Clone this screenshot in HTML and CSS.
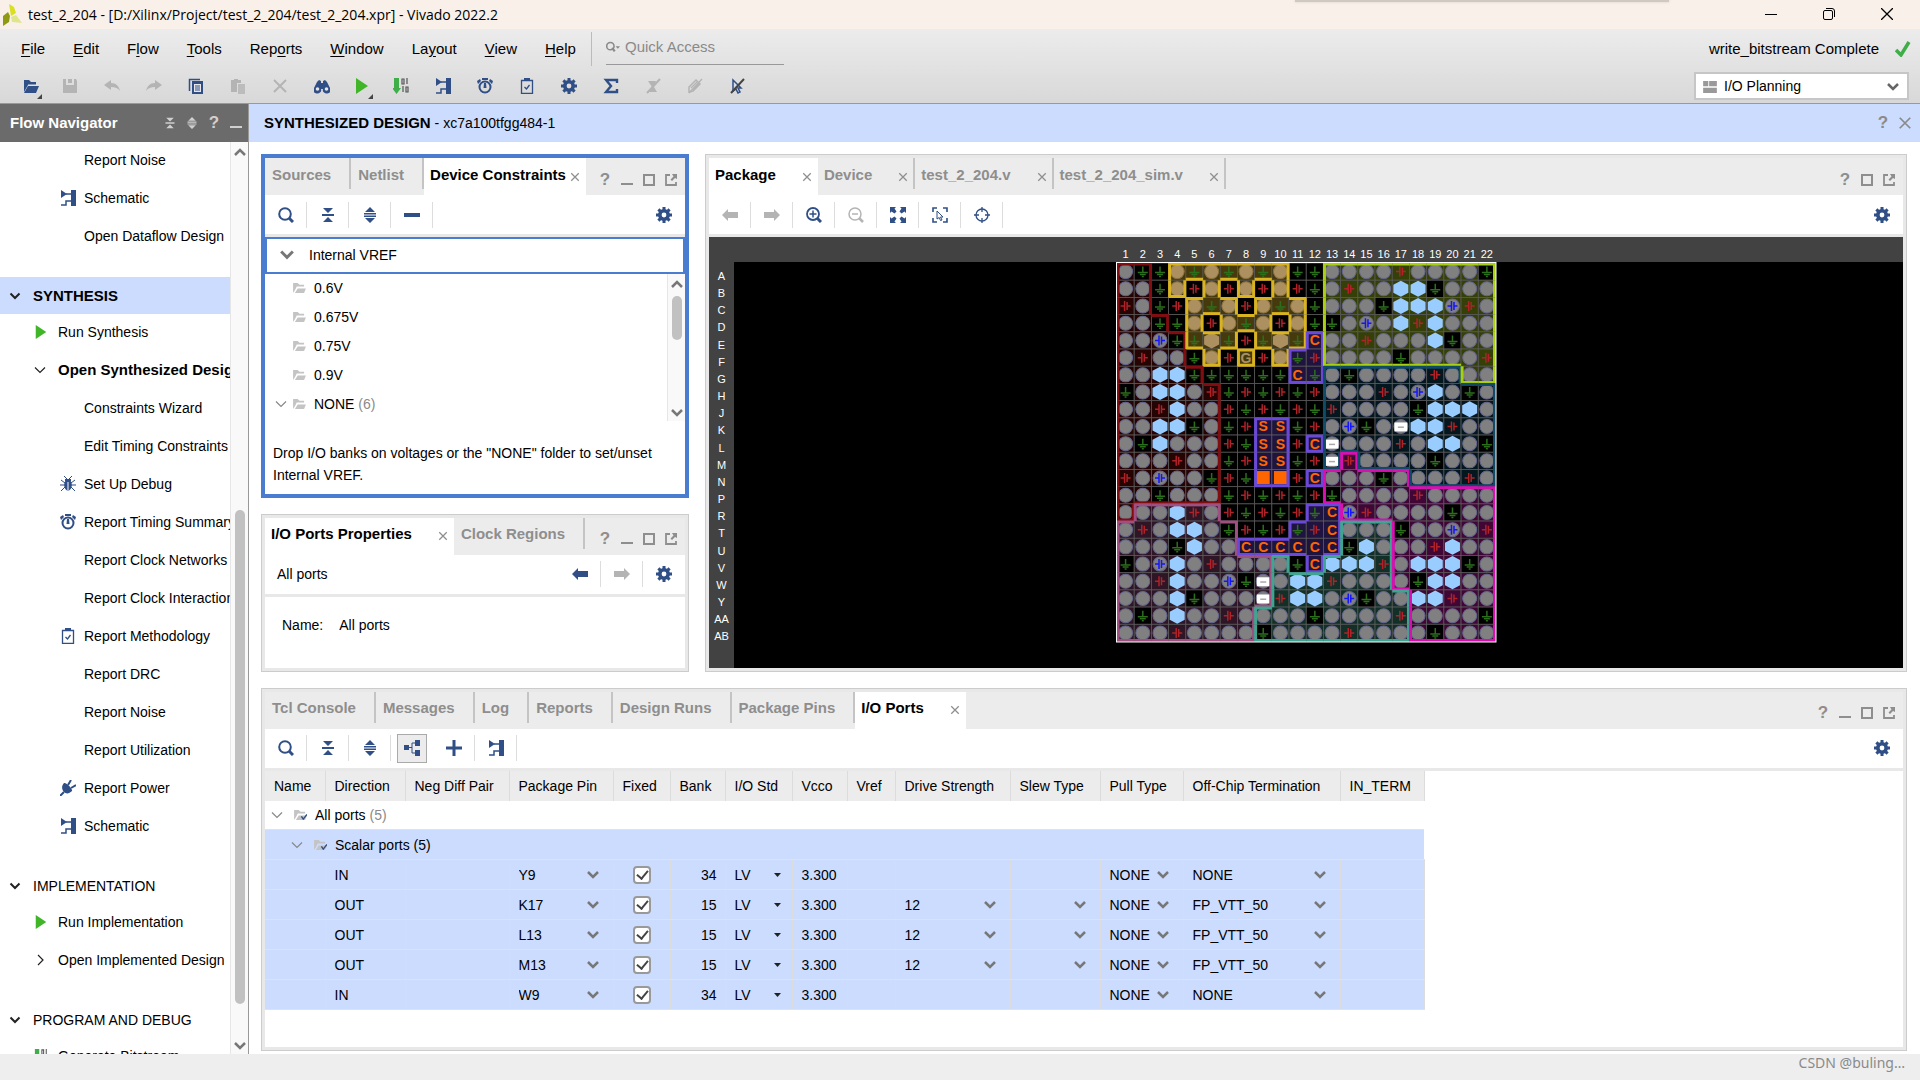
FILE: index.html
```html
<!DOCTYPE html>
<html lang="en">
<head>
  <meta charset="utf-8">
  <title>test_2_204 - Vivado 2022.2</title>
  <link rel="stylesheet" href="styles.css">
</head>
<body>

  <!-- icon set -->
  <svg class="sprite" aria-hidden="true">
    <symbol id="i-logo" viewBox="0 0 20 24"><path d="M7 1 L12 4 L14 10 L9 13 Z" fill="#d9e021"/><path d="M6 9 L8 13 L7 19 L1 23 L1 13 Z" fill="#8f9a10"/><path d="M9 14 L14 12 L20 20 L10 19 Z" fill="#dfe58a"/></symbol>
    <symbol id="i-open" viewBox="0 0 16 16"><path d="M1 14V2h5l2 2h5v3H5z M1 15l4-7h11l-3 7z"/><path d="M5 7h9" stroke="#e4e4e4"/></symbol>
    <symbol id="i-save" viewBox="0 0 16 16"><path d="M1 1h3v6h8V1h2l1 2v12H1z M6 1h4v4H6z"/></symbol>
    <symbol id="i-undo" viewBox="0 0 16 16"><path d="M0 7l7-5v3c5 0 8 3 9 8-2-3-5-4-9-4v3z"/></symbol>
    <symbol id="i-redo" viewBox="0 0 16 16"><path d="M16 7L9 2v3C4 5 1 8 0 13c2-3 5-4 9-4v3z"/></symbol>
    <symbol id="i-copy" viewBox="0 0 16 16"><path d="M1.500 13V1.500H12" fill="none" stroke="currentColor" stroke-width="1.500"/><path d="M4 3h11v13H4z"/><path d="M6 6h7v8H6z" fill="#e8e8e8"/><path d="M7 8h5M7 10h5M7 12h5" stroke="currentColor"/></symbol>
    <symbol id="i-paste" viewBox="0 0 16 16"><path d="M1 2h3V1h4v1h3v3H7v9H1z"/><path d="M8 6h7v10H8z" opacity=".8"/></symbol>
    <symbol id="i-x" viewBox="0 0 16 16"><path d="M2 2l12 12M14 2L2 14" fill="none" stroke="currentColor" stroke-width="2"/></symbol>
    <symbol id="i-find" viewBox="0 0 16 16"><path d="M3 4l2-2 2 1v2h2V3l2-1 2 2 3 6a4 3.500 0 1 1-7 1H7a4 3.500 0 1 1-7-1z"/><circle cx="3.500" cy="11" r="1.800" fill="#e4e4e4"/><circle cx="12.500" cy="11" r="1.800" fill="#e4e4e4"/></symbol>
    <symbol id="i-play" viewBox="0 0 16 16"><path d="M2 0l12 8-12 8z" fill="#3fb527"/></symbol>
    <symbol id="i-bits" viewBox="0 0 16 16"><path d="M1 0h5v10h2l-4.500 6L-1 10h2z" fill="#3fae49"/><path d="M9 1h2v5H9zM14 0v6M10 8v6M13 9h2v5h-2z" fill="none" stroke="#555" stroke-width="1.200"/></symbol>
    <symbol id="i-schem" viewBox="0 0 16 16"><path d="M1 0l6 4-6 4z M11 0h5v16h-5z"/><path d="M6 4h6M1 15h5v-4h6" fill="none" stroke="currentColor" stroke-width="1.500"/></symbol>
    <symbol id="i-clock" viewBox="0 0 16 16"><circle cx="8" cy="9" r="5.500" fill="none" stroke="currentColor" stroke-width="2"/><path d="M5 0h6v2H5z M7 5h2l.5 5h-3z M0 3l3-2 1 2-3 3z M16 3l-3-2-1 2 3 3z"/></symbol>
    <symbol id="i-clip" viewBox="0 0 16 16"><path d="M2.500 2.500h11v13h-11z" fill="none" stroke="currentColor" stroke-width="1.300"/><path d="M5 0h6v3H5z"/><path d="M5.500 9l2 2 3-4" fill="none" stroke="currentColor" stroke-width="1.300"/></symbol>
    <symbol id="i-gear" viewBox="0 0 16 16"><circle cx="8" cy="8" r="4.200" fill="none" stroke="currentColor" stroke-width="3.600"/><path d="M8 0v4M8 12v4M0 8h4M12 8h4M2.400 2.400l2.500 2.500M11.100 11.100l2.500 2.500M13.600 2.400l-2.500 2.500M4.900 11.100l-2.500 2.500" stroke="currentColor" stroke-width="3"/></symbol>
    <symbol id="i-sigma" viewBox="0 0 16 16"><path d="M14 5V2H3l5 6-5 6h11v-3" fill="none" stroke="currentColor" stroke-width="2.400"/></symbol>
    <symbol id="i-noclean" viewBox="0 0 16 16"><path d="M3 3h8l-2 6 3 5H3l4-5z"/><path d="M15 1L2 15" stroke="currentColor" stroke-width="2"/></symbol>
    <symbol id="i-noedit" viewBox="0 0 16 16"><path d="M2 9l7-7 4 4-7 7-4 1z" fill="none" stroke="currentColor" stroke-width="1.500"/><path d="M4 10l6-6M6 12l7-7M15 1L2 15" stroke="currentColor" stroke-width="1.300"/></symbol>
    <symbol id="i-nosel" viewBox="0 0 16 16"><path d="M4 2l8 8H9l2 4-2 1-2-4-3 2z" fill="none" stroke="#2f4f86" stroke-width="1.500"/><path d="M15 1L2 15" stroke="#444" stroke-width="2"/></symbol>
    <symbol id="i-bug" viewBox="0 0 16 16"><ellipse cx="8" cy="9" rx="3.800" ry="5.500"/><path d="M5 3h6v2H5z"/><path d="M4 0l3 3M12 0L9 3M0 9h16M1 4l4 3M15 4l-4 3M1 15l4-4M15 15l-4-4" stroke="currentColor"/><path d="M8 6v8" stroke="#fff"/></symbol>
    <symbol id="i-plug" viewBox="0 0 16 16"><path d="M4 3c2-1 9 6 8 8-3 3-6 3-8 1S1 6 4 3z"/><path d="M0 16l4-4M8 5l3-5M11 8l5-3" stroke="currentColor" stroke-width="2"/></symbol>
    <symbol id="i-down" viewBox="0 0 12 12"><path d="M1.500 3.500L6 8l4.500-4.500" fill="none" stroke="currentColor" stroke-width="2"/></symbol>
    <symbol id="i-thin" viewBox="0 0 12 12"><path d="M1 3.500L6 8.500l5-5" fill="none" stroke="currentColor" stroke-width="1.200"/></symbol>
    <symbol id="i-right" viewBox="0 0 12 12"><path d="M4 1l5 5-5 5" fill="none" stroke="currentColor" stroke-width="1.200"/></symbol>
    <symbol id="i-up" viewBox="0 0 12 12"><path d="M1 9l5-5 5 5" fill="none" stroke="currentColor" stroke-width="2.500"/></symbol>
    <symbol id="i-fat" viewBox="0 0 12 12"><path d="M1 3l5 5 5-5" fill="none" stroke="currentColor" stroke-width="2.500"/></symbol>
    <symbol id="i-collapse" viewBox="0 0 16 16"><path d="M3 1h10L8 6z M3 15h10l-5-5z M2 7h12v2H2z"/></symbol>
    <symbol id="i-expand" viewBox="0 0 16 16"><path d="M8 0l5 5H3z M8 16l5-5H3z M2 6h12v1.500H2z M2 8.500h12V10H2z"/></symbol>
    <symbol id="i-search" viewBox="0 0 16 16"><circle cx="7" cy="7" r="5.800" fill="none" stroke="currentColor" stroke-width="2"/><path d="M11 11l4 4" stroke="currentColor" stroke-width="3"/></symbol>
    <symbol id="i-quick" viewBox="0 0 16 16"><circle cx="5" cy="7" r="4.200" fill="none" stroke="currentColor" stroke-width="1.800"/><path d="M7 9l3 4" stroke="currentColor" stroke-width="2.500"/><path d="M11 7h5l-2.500 3z"/></symbol>
    <symbol id="i-zin" viewBox="0 0 16 16"><circle cx="7" cy="7" r="6" fill="none" stroke="currentColor" stroke-width="1.800"/><path d="M11 11l4 4" stroke="currentColor" stroke-width="3"/><path d="M3.500 7h7M7 3.500v7" stroke="currentColor" stroke-width="1.500"/></symbol>
    <symbol id="i-zout" viewBox="0 0 16 16"><circle cx="7" cy="7" r="6" fill="none" stroke="currentColor" stroke-width="1.500"/><path d="M11 11l4 4" stroke="currentColor" stroke-width="2.500"/><path d="M4 7h6" stroke="currentColor" stroke-width="1.500"/></symbol>
    <symbol id="i-fit" viewBox="0 0 16 16"><path d="M0 0h6L4.500 1.500l2 3-2 2-3-2L0 6zM16 0v6l-1.500-1.500-3 2-2-2 2-3L10 0zM0 16v-6l1.500 1.500 3-2 2 2-2 3L6 16zM16 16h-6l1.500-1.500-2-3 2-2 3 2L16 10z"/></symbol>
    <symbol id="i-fitsel" viewBox="0 0 16 16"><path d="M1 5V1h4M11 1h4v4M15 11v4h-4M5 15H1v-4" fill="none" stroke="currentColor" stroke-width="1.600"/><path d="M5 4l6 6H8.500l1.500 3-1.500.5-1.300-3L5 12z" fill="none" stroke="currentColor"/></symbol>
    <symbol id="i-target" viewBox="0 0 16 16"><circle cx="8" cy="8" r="6" fill="none" stroke="currentColor" stroke-width="1.300"/><path d="M8 0v5M8 11v5M0 8h5M11 8h5" stroke="currentColor" stroke-width="1.300"/></symbol>
    <symbol id="i-back" viewBox="0 0 16 16"><path d="M0 8l6-6v3h10v6H6v3z"/></symbol>
    <symbol id="i-fwd" viewBox="0 0 16 16"><path d="M16 8l-6-6v3H0v6h10v3z"/></symbol>
    <symbol id="i-minus" viewBox="0 0 16 16"><path d="M0 6h16v4H0z"/></symbol>
    <symbol id="i-plus" viewBox="0 0 16 16"><path d="M0 6.500h6.500V0h3v6.500H16v3H9.500V16h-3V9.500H0z"/></symbol>
    <symbol id="i-tree" viewBox="0 0 16 16"><path d="M0 5h5v5H0z M11 0h5v6h-5z M11 10h5v6h-5z"/><path d="M5 7.500h3M11 3H8v10h3" fill="none" stroke="currentColor"/></symbol>
    <symbol id="i-min" viewBox="0 0 12 12"><path d="M0 9h12v2H0z"/></symbol>
    <symbol id="i-max" viewBox="0 0 12 12"><path d="M1 1h10v10H1z" fill="none" stroke="currentColor" stroke-width="2"/></symbol>
    <symbol id="i-pop" viewBox="0 0 12 12"><path d="M5 1H1v10h10V8" fill="none" stroke="currentColor" stroke-width="1.800"/><path d="M7 0h5v5l-2-1-3 3-1.500-1.500 3-3z"/></symbol>
    <symbol id="i-folder" viewBox="0 0 14 12"><path d="M0 12V1h5l2 2h5v2H4L2 9z" /><path d="M2 12l3-5h9l-2 5z"/></symbol>
    <symbol id="i-folderck" viewBox="0 0 14 12"><path d="M0 12V1h5l2 2h5v2H4L2 9z" /><path d="M2 12l3-5h9l-2 5z"/><path d="M8 8l2 3 4-5" fill="none" stroke="#2f4f86" stroke-width="1.500"/></symbol>
    <symbol id="i-layout" viewBox="0 0 16 14"><path d="M0 0h6v6H0zM7 0h9v6H7zM0 8h16v6H0z"/></symbol>
    <symbol id="i-check" viewBox="0 0 16 16"><path d="M1 9l5 5L14 1" fill="none" stroke="#3fae49" stroke-width="3.500"/></symbol>
    <symbol id="i-wmin" viewBox="0 0 12 12"><path d="M0 6.500h12" stroke="currentColor"/></symbol>
    <symbol id="i-wmax" viewBox="0 0 12 12"><rect x=".5" y="2.500" width="9" height="9" rx="1.500" fill="none" stroke="currentColor"/><path d="M3 .5h6a2.500 2.500 0 0 1 2.500 2.500v6" fill="none" stroke="currentColor"/></symbol>
    <symbol id="i-wclose" viewBox="0 0 12 12"><path d="M0 0l12 12M12 0L0 12" stroke="currentColor" stroke-width="1.300"/></symbol>
    <symbol id="i-tri" viewBox="0 0 8 8"><path d="M1 2h7L4.500 6z"/></symbol>
  </svg>

  <header class="titlebar">
    <svg class="logo"><use href="#i-logo"/></svg>
    <span class="title">test_2_204 - [D:/Xilinx/Project/test_2_204/test_2_204.xpr] - Vivado 2022.2</span>
    <div class="drag-tab"></div>
    <div class="win-buttons">
      <button aria-label="Minimize"><svg class="i12"><use href="#i-wmin"/></svg></button>
      <button aria-label="Restore"><svg class="i12"><use href="#i-wmax"/></svg></button>
      <button aria-label="Close"><svg class="i12"><use href="#i-wclose"/></svg></button>
    </div>
  </header>

  <div class="topbar">
    <div class="menu-row">
      <nav class="menu">
        <button><u>F</u>ile</button>
        <button><u>E</u>dit</button>
        <button>F<u>l</u>ow</button>
        <button><u>T</u>ools</button>
        <button>Rep<u>o</u>rts</button>
        <button><u>W</u>indow</button>
        <button>La<u>y</u>out</button>
        <button><u>V</u>iew</button>
        <button><u>H</u>elp</button>
      </nav>
      <label class="quick">
        <svg class="i14"><use href="#i-quick"/></svg>
        <input type="text" placeholder="Quick Access" aria-label="Quick Access">
      </label>
      <span class="run-status">write_bitstream Complete</span>
      <svg class="i16"><use href="#i-check"/></svg>
    </div>
    <div class="tool-row">
      <button class="drop" aria-label="Open"><svg class="i16"><use href="#i-open"/></svg></button>
      <button class="off" aria-label="Save"><svg class="i16"><use href="#i-save"/></svg></button>
      <button class="off" aria-label="Undo"><svg class="i16"><use href="#i-undo"/></svg></button>
      <button class="off" aria-label="Redo"><svg class="i16"><use href="#i-redo"/></svg></button>
      <button aria-label="Copy"><svg class="i16"><use href="#i-copy"/></svg></button>
      <button class="off" aria-label="Paste"><svg class="i16"><use href="#i-paste"/></svg></button>
      <button class="off" aria-label="Delete"><svg class="i16"><use href="#i-x"/></svg></button>
      <button aria-label="Find"><svg class="i16"><use href="#i-find"/></svg></button>
      <button class="drop" aria-label="Run"><svg class="i16"><use href="#i-play"/></svg></button>
      <button aria-label="Generate Bitstream"><svg class="i16"><use href="#i-bits"/></svg></button>
      <button aria-label="Schematic"><svg class="i16"><use href="#i-schem"/></svg></button>
      <button aria-label="Timing"><svg class="i16"><use href="#i-clock"/></svg></button>
      <button aria-label="Methodology"><svg class="i16"><use href="#i-clip"/></svg></button>
      <button aria-label="Settings"><svg class="i16"><use href="#i-gear"/></svg></button>
      <button aria-label="Sum"><svg class="i16"><use href="#i-sigma"/></svg></button>
      <button class="off" aria-label="Unhighlight"><svg class="i16"><use href="#i-noclean"/></svg></button>
      <button class="off" aria-label="Unmark"><svg class="i16"><use href="#i-noedit"/></svg></button>
      <button aria-label="Unselect"><svg class="i16"><use href="#i-nosel"/></svg></button>
      <div class="layout-pick">
        <svg class="pick-icon"><use href="#i-layout"/></svg>
        <select aria-label="Layout"><option>I/O Planning</option></select>
        <svg class="pick-arrow"><use href="#i-fat"/></svg>
      </div>
    </div>
  </div>

  <div class="workspace">
    <aside class="flow">
      <div class="flow-head">
        <h2>Flow Navigator</h2>
        <svg class="i12"><use href="#i-collapse"/></svg>
        <svg class="i12"><use href="#i-expand"/></svg>
        <b>?</b>
        <svg class="i12"><use href="#i-min"/></svg>
      </div>
      <div class="flow-body">
        <ul class="flow-list">
          <li class="sub"><i></i>Report Noise</li>
          <li class="sub"><i><svg class="i16"><use href="#i-schem"/></svg></i>Schematic</li>
          <li class="sub"><i></i>Open Dataflow Design</li>
          <li class="head current"><i><svg class="i12"><use href="#i-down"/></svg></i>SYNTHESIS</li>
          <li class="run"><i><svg class="i14"><use href="#i-play"/></svg></i>Run Synthesis</li>
          <li class="run strong"><i><svg class="i12"><use href="#i-thin"/></svg></i>Open Synthesized Design</li>
          <li class="sub"><i></i>Constraints Wizard</li>
          <li class="sub"><i></i>Edit Timing Constraints</li>
          <li class="sub"><i><svg class="i16"><use href="#i-bug"/></svg></i>Set Up Debug</li>
          <li class="sub"><i><svg class="i16"><use href="#i-clock"/></svg></i>Report Timing Summary</li>
          <li class="sub"><i></i>Report Clock Networks</li>
          <li class="sub"><i></i>Report Clock Interaction</li>
          <li class="sub"><i><svg class="i16"><use href="#i-clip"/></svg></i>Report Methodology</li>
          <li class="sub"><i></i>Report DRC</li>
          <li class="sub"><i></i>Report Noise</li>
          <li class="sub"><i></i>Report Utilization</li>
          <li class="sub"><i><svg class="i16"><use href="#i-plug"/></svg></i>Report Power</li>
          <li class="sub"><i><svg class="i16"><use href="#i-schem"/></svg></i>Schematic</li>
          <li class="head"><i><svg class="i12"><use href="#i-down"/></svg></i>IMPLEMENTATION</li>
          <li class="run"><i><svg class="i14"><use href="#i-play"/></svg></i>Run Implementation</li>
          <li class="run"><i><svg class="i12"><use href="#i-right"/></svg></i>Open Implemented Design</li>
          <li class="head"><i><svg class="i12"><use href="#i-down"/></svg></i>PROGRAM AND DEBUG</li>
          <li class="run"><i><svg class="i14"><use href="#i-bits"/></svg></i>Generate Bitstream</li>
        </ul>
        <div class="scroll">
          <svg class="i12"><use href="#i-up"/></svg>
          <div class="track"><div class="thumb thumb-flow"></div></div>
          <svg class="i12"><use href="#i-fat"/></svg>
        </div>
      </div>
    </aside>

    <main class="design">
      <div class="design-head">
        <h1>SYNTHESIZED DESIGN<span> - xc7a100tfgg484-1</span></h1>
        <b>?</b>
        <svg class="i14"><use href="#i-x"/></svg>
      </div>

      <div class="panels">
        <div class="upper">
          <div class="left-col">
            <section class="panel focused constraints">
              <div class="tabs">
                <button class="tab">Sources</button>
                <button class="tab">Netlist</button>
                <button class="tab active tight">Device Constraints<svg class="close"><use href="#i-x"/></svg></button>
                <div class="tab-tools"><b>?</b><svg class="i12"><use href="#i-min"/></svg><svg class="i12"><use href="#i-max"/></svg><svg class="i12"><use href="#i-pop"/></svg></div>
              </div>
              <div class="tools">
                <button aria-label="Search"><svg class="i16"><use href="#i-search"/></svg></button>
                <button aria-label="Collapse"><svg class="i16"><use href="#i-collapse"/></svg></button>
                <button aria-label="Expand"><svg class="i16"><use href="#i-expand"/></svg></button>
                <button aria-label="Remove"><svg class="i16"><use href="#i-minus"/></svg></button>
                <button class="gear" aria-label="Settings"><svg class="i16"><use href="#i-gear"/></svg></button>
              </div>
              <div class="vref"><svg class="i14"><use href="#i-fat"/></svg>Internal VREF</div>
              <div class="volts">
                <ul>
                  <li><i></i><svg class="folder"><use href="#i-folder"/></svg>0.6V</li>
                  <li><i></i><svg class="folder"><use href="#i-folder"/></svg>0.675V</li>
                  <li><i></i><svg class="folder"><use href="#i-folder"/></svg>0.75V</li>
                  <li><i></i><svg class="folder"><use href="#i-folder"/></svg>0.9V</li>
                  <li><i><svg class="i12"><use href="#i-thin"/></svg></i><svg class="folder"><use href="#i-folder"/></svg>NONE&nbsp;<span class="dim">(6)</span></li>
                </ul>
                <div class="scroll">
                  <svg class="i12"><use href="#i-up"/></svg>
                  <div class="track"><div class="thumb thumb-volts"></div></div>
                  <svg class="i12"><use href="#i-fat"/></svg>
                </div>
              </div>
              <p class="hint">Drop I/O banks on voltages or the "NONE" folder to set/unset Internal VREF.</p>
            </section>

            <section class="panel props">
              <div class="tabs">
                <button class="tab active">I/O Ports Properties<svg class="close"><use href="#i-x"/></svg></button>
                <button class="tab">Clock Regions</button>
                <div class="tab-tools"><b>?</b><svg class="i12"><use href="#i-min"/></svg><svg class="i12"><use href="#i-max"/></svg><svg class="i12"><use href="#i-pop"/></svg></div>
              </div>
              <div class="tools">
                <span class="tools-title">All ports</span>
                <button aria-label="Previous"><svg class="i16"><use href="#i-back"/></svg></button>
                <button class="off" aria-label="Next"><svg class="i16"><use href="#i-fwd"/></svg></button>
                <button class="gear" aria-label="Settings"><svg class="i16"><use href="#i-gear"/></svg></button>
              </div>
              <dl class="prop"><dt>Name:</dt><dd>All ports</dd></dl>
            </section>
          </div>

          <section class="panel package">
            <div class="tabs">
              <button class="tab active">Package<svg class="close"><use href="#i-x"/></svg></button>
              <button class="tab closable">Device<svg class="close"><use href="#i-x"/></svg></button>
              <button class="tab closable">test_2_204.v<svg class="close"><use href="#i-x"/></svg></button>
              <button class="tab closable">test_2_204_sim.v<svg class="close"><use href="#i-x"/></svg></button>
              <div class="tab-tools"><b>?</b><svg class="i12"><use href="#i-max"/></svg><svg class="i12"><use href="#i-pop"/></svg></div>
            </div>
            <div class="tools">
              <button class="off" aria-label="Back"><svg class="i16"><use href="#i-back"/></svg></button>
              <button class="off" aria-label="Forward"><svg class="i16"><use href="#i-fwd"/></svg></button>
              <button aria-label="Zoom in"><svg class="i16"><use href="#i-zin"/></svg></button>
              <button class="off" aria-label="Zoom out"><svg class="i16"><use href="#i-zout"/></svg></button>
              <button aria-label="Zoom fit"><svg class="i16"><use href="#i-fit"/></svg></button>
              <button aria-label="Zoom to selection"><svg class="i16"><use href="#i-fitsel"/></svg></button>
              <button aria-label="Autofit"><svg class="i16"><use href="#i-target"/></svg></button>
              <button class="gear" aria-label="Settings"><svg class="i16"><use href="#i-gear"/></svg></button>
            </div>
            <div class="canvas">
              <div class="ruler" id="ruler"></div>
              <div class="stage"><svg id="chip"></svg></div>
            </div>
          </section>
        </div>

        <section class="panel ports">
          <div class="tabs">
            <button class="tab">Tcl Console</button>
            <button class="tab">Messages</button>
            <button class="tab">Log</button>
            <button class="tab">Reports</button>
            <button class="tab">Design Runs</button>
            <button class="tab">Package Pins</button>
            <button class="tab active">I/O Ports<svg class="close"><use href="#i-x"/></svg></button>
            <div class="tab-tools"><b>?</b><svg class="i12"><use href="#i-min"/></svg><svg class="i12"><use href="#i-max"/></svg><svg class="i12"><use href="#i-pop"/></svg></div>
          </div>
          <div class="tools">
            <button aria-label="Search"><svg class="i16"><use href="#i-search"/></svg></button>
            <button aria-label="Collapse"><svg class="i16"><use href="#i-collapse"/></svg></button>
            <button aria-label="Expand"><svg class="i16"><use href="#i-expand"/></svg></button>
            <button class="pressed" aria-label="Group"><svg class="i16"><use href="#i-tree"/></svg></button>
            <button aria-label="Add"><svg class="i16"><use href="#i-plus"/></svg></button>
            <button aria-label="Schematic"><svg class="i16"><use href="#i-schem"/></svg></button>
            <button class="gear" aria-label="Settings"><svg class="i16"><use href="#i-gear"/></svg></button>
          </div>
          <table class="port-table">
            <colgroup>
              <col class="w60"><col class="w80"><col class="w104"><col class="w104"><col class="w57"><col class="w55"><col class="w67">
              <col class="w55"><col class="w48"><col class="w115"><col class="w90"><col class="w83"><col class="w157"><col class="w84">
            </colgroup>
            <thead>
              <tr><th>Name</th><th>Direction</th><th>Neg Diff Pair</th><th>Package Pin</th><th>Fixed</th><th>Bank</th><th>I/O Std</th><th>Vcco</th><th>Vref</th><th>Drive Strength</th><th>Slew Type</th><th>Pull Type</th><th>Off-Chip Termination</th><th>IN_TERM</th></tr>
            </thead>
            <tbody id="ports">
              <tr class="group top"><td colspan="14"><div class="node"><svg class="i12"><use href="#i-thin"/></svg><svg class="folder"><use href="#i-folderck"/></svg>All ports&nbsp;<span class="dim">(5)</span></div></td></tr>
              <tr class="group sel"><td colspan="14"><div class="node deep"><svg class="i12"><use href="#i-thin"/></svg><svg class="folder"><use href="#i-folderck"/></svg>Scalar ports (5)</div></td></tr>
            </tbody>
          </table>
        </section>
      </div>
    </main>
  </div>

  <footer class="status">CSDN @buling…</footer>

  <script>
    // ---- port rows ----
    const ports = [
      ['IN', 'Y9', 34, '', 'NONE'],
      ['OUT', 'K17', 15, '12', 'FP_VTT_50'],
      ['OUT', 'L13', 15, '12', 'FP_VTT_50'],
      ['OUT', 'M13', 15, '12', 'FP_VTT_50'],
      ['IN', 'W9', 34, '', 'NONE']
    ];

    function pick(label, value, cls, icon) {
      return `<div class="pick ${cls || ''}"><select aria-label="${label}"><option>${value}</option></select>` +
        `<svg class="i12"><use href="#${icon || 'i-fat'}"/></svg></div>`;
    }

    document.getElementById('ports').insertAdjacentHTML('beforeend', ports.map(p => {
      const out = p[0] === 'OUT';
      return `<tr class="sel"><td></td><td>${p[0]}</td><td></td><td>${pick('Package Pin', p[1])}</td>` +
        `<td class="mid"><input type="checkbox" aria-label="Fixed" checked></td><td class="num">${p[2]}</td>` +
        `<td>${pick('I/O Std', 'LV', 'std', 'i-tri')}</td><td>3.300</td><td></td>` +
        `<td>${out ? pick('Drive Strength', p[3]) : ''}</td><td>${out ? pick('Slew Type', '') : ''}</td>` +
        `<td>${pick('Pull Type', 'NONE')}</td><td>${pick('Off-Chip Termination', p[4])}</td><td></td></tr>`;
    }).join(''));

    // ---- package view ----
    const rowNames = 'A B C D E F G H J K L M N P R T U V W Y AA AB'.split(' ');

    // o io, h hex, g gnd, r power, b clock, w assigned, C/S/G config, Q square
    const grid = [
      'oggogogogoggooooroooog',
      'oogororororgoroohhgooo',
      'rogrogorogogoooghhhbro',
      'ooggorogoroggobohrhooo',
      'oobgghgrghgCoorooohgoo',
      'oroogorGrogroooogoooor',
      'oohhggggggCgogoooorooo',
      'gohhorgrgrgrooorobhogo',
      'oorhoorgrgrgrooooghhho',
      'oohhgogrSSgrobgowhhroo',
      'oghooorgSSrCwooorohhog',
      'oooroogrSSgrwroooogooo',
      'roboogrgQQrCooogooooro',
      'oogooogrgrgrgoooorooo'+'o',
      'ooohrorgrgrgCbroooogoo',
      'orohhogrgrgrCooogoobor',
      'oooghooCCCCCCghooorhoo',
      'gobhoroooogChhhrohhhgo',
      'oorhoobgwohhrooooghhoo',
      'ooohgooowrhhobgoohhroo',
      'ogohooroooogooooroooog',
      'ooorooooogoooroooogooo'
    ];
    // AB9 carries the ground pin of the last row
    grid[21] = 'ooorooooGooo'.replace('G', 'g') + 'oroooogooo';

    // I/O bank of every pin
    const banks = [
      'RR.YYYYYYY..LLLLLLLLLL',
      'RR.Y.Y.Y.Y..LLLLLLLLLL',
      'RR..YYY.YYY.LLLLLLLLLL',
      'RRR.Y.YYY.Y.LLLLLLLLLL',
      'RRRRYYY.YYYPLLLLLLLLLL',
      'RRRR.Y.Y.YPPLLLLLLLLLL',
      'RRRRR.....PPNNNNNNNNLL',
      'RRRRRR......NNNNNNNNNN',
      'RRRRRR......NNNNNNNNNN',
      'RRRRRR..PP..NNNNNNNNNN',
      'RRRRRR..PP.PNNNNNNNNNN',
      'RRRRRR..PP..NMNNNNNNNN',
      'RRRRRR..PP.PMMMMMNNNNN',
      'RRRRRR......MMMMMMMMMM',
      'RVVVVV.....PPMMMMMMMMM',
      'VVVVVVV...PPPTTTMMMMMM',
      'VVVVVVVPPPPPPTTTMMMMMM',
      'VVVVVVVVVT.PTTTTMMMMMM',
      'VVVVVVVVVTTTTTTTMMMMMM',
      'VVVVVVVVVTTTTTTTTMMMMM',
      'VVVVVVVVTTTTTTTTTMMMMM',
      'VVVVVVVVTTTTTTTTTMMMMM'
    ];
    const line = { R: '#800d10', Y: '#d9b420', P: '#6a48d8', L: '#a8d010', N: '#0f4a66', M: '#d810b0', V: '#a05080', T: '#40a590' };
    const fill = { R: '#260404', Y: '#463a0c', P: '#1f1440', L: '#344008', N: '#04161e', M: '#400636', V: '#2e1626', T: '#123028', '.': '#000' };
    const S = 17.2; // pin pitch

    function pin(t, x, y, bank) {
      const cx = x + S / 2, cy = y + S / 2;
      const io = bank === 'Y' ? '#ac9060' : '#808080';
      const ball = `<circle cx="${cx}" cy="${cy}" r="7" fill="${io}" stroke="${bank === 'Y' ? '#8d7440' : '#66668c'}"/>`;
      const power = c => `<path d="M${cx - 5} ${cy}h4M${cx + 1} ${cy}h4M${cx - 1} ${cy - 5}v10M${cx + 1.5} ${cy - 4}v8" stroke="${c}" stroke-width="1.5" fill="none"/>`;
      switch (t) {
        case 'o': return ball;
        case 'h': return `<path d="M${cx} ${cy - 8}l7.5 4v8l-7.5 4l-7.5 -4v-8z" fill="${bank === 'Y' ? io : '#99ccff'}"/>`;
        case 'g': return `<path d="M${cx} ${cy - 5}v6M${cx - 5} ${cy + 1}h10M${cx - 3} ${cy + 3}h6M${cx - 1} ${cy + 5}h2" stroke="#2c6e1c" stroke-width="1.5" fill="none"/>`;
        case 'r': return power('#b02228');
        case 'b': return ball + power('#1414ff');
        case 'w': return ball + `<rect x="${cx - 6.5}" y="${cy - 4}" width="13" height="9" fill="#fff"/><rect x="${cx - 3}" y="${cy}" width="6" height="1.5" fill="#aaa"/>`;
        case 'Q': return `<rect x="${cx - 6.5}" y="${cy - 7}" width="13" height="13" fill="#ff6600"/>`;
        case 'G': return `<text class="pin-letter" x="${cx}" y="${cy + 5}" fill="#ac9060">G</text>`;
        default: return `<text class="pin-letter" x="${cx}" y="${cy + 5}" fill="#ff6600">${t}</text>`;
      }
    }

    function drawChip() {
      let back = '', front = '', edges = '', labels = '';
      for (let r = 0; r < 22; r++) {
        for (let c = 0; c < 22; c++) {
          const b = banks[r][c], t = grid[r][c];
          const x = c * S, y = r * S;
          const black = t === 'g' && b !== 'P' && b !== 'Y';
          back += `<rect x="${x}" y="${y}" width="${S}" height="${S}" fill="${black ? '#000' : fill[b]}" stroke="#5a5a5a" stroke-width=".8"/>`;
          front += pin(t, x, y, b);
          if (b === '.') continue;
          const at = (i, j) => (banks[i] || '')[j];
          let d = '';
          if (at(r - 1, c) !== b) d += `M${x} ${y + 1}h${S}`;
          if (at(r + 1, c) !== b) d += `M${x} ${y + S - 1}h${S}`;
          if (at(r, c - 1) !== b) d += `M${x + 1} ${y}v${S}`;
          if (at(r, c + 1) !== b) d += `M${x + S - 1} ${y}v${S}`;
          if (d) edges += `<path d="${d}" stroke="${line[b]}" stroke-width="3"/>`;
        }
      }
      const W = S * 22;
      for (let c = 0; c < 22; c++) {
        labels += `<text class="axis" x="${c * S + S / 2}" y="-5">${c + 1}</text>`;
      }
      const chip = document.getElementById('chip');
      chip.setAttribute('viewBox', `-1 -26 ${W + 2} ${W + 52}`);
      chip.innerHTML = back + front + edges +
        `<rect x="-.5" y="-.5" width="${W + 1}" height="${W + 1}" fill="none" stroke="#fff"/>` + labels;
      document.getElementById('ruler').innerHTML = rowNames.map(n => `<span>${n}</span>`).join('');
    }
    drawChip();
  </script>
</body>
</html>
```
FILE: styles.css
```css
* {
  box-sizing: border-box;
}

body {
  margin: 0;
  height: 100vh;
  display: flex;
  flex-direction: column;
  overflow: hidden;
  background: #fff;
  color: #000;
  font: 14px/20px "Liberation Sans", Arial, sans-serif;
}

button, input, select {
  font: inherit;
  color: inherit;
  border: 0;
  background: none;
  padding: 0;
  margin: 0;
}

select {
  appearance: none;
}

ul, dl, dd, h1, h2, p {
  margin: 0;
  padding: 0;
  list-style: none;
}

svg {
  fill: currentColor;
  flex: none;
}

.sprite {
  position: absolute;
  width: 0;
  height: 0;
}

.i16 { width: 16px; height: 16px; }
.i14 { width: 14px; height: 14px; }
.i12 { width: 12px; height: 12px; }

/* window title */
.titlebar {
  position: relative;
  display: flex;
  align-items: center;
  flex: none;
  height: 29px;
  padding: 0 4px 0 2px;
  background: #f9f1e9;
}

.logo {
  width: 20px;
  height: 24px;
}

.title {
  flex: 1;
  padding-left: 6px;
  font: 14px/20px "Open Sans", "Noto Sans", sans-serif;
}

.drag-tab {
  position: absolute;
  left: 1295px;
  top: 0;
  width: 374px;
  height: 2px;
  background: #cfc9c2;
  box-shadow: 0 0 3px #cfc9c2;
}

.win-buttons {
  display: flex;
}

.win-buttons button {
  width: 58px;
  height: 29px;
}

/* menu and main toolbar */
.topbar {
  flex: none;
  height: 75px;
  border-bottom: 1px solid #999;
  background: linear-gradient(#ececec, #d8d8d8);
}

.menu-row {
  display: flex;
  align-items: center;
  height: 40px;
  padding: 0 9px 0 7px;
  font-size: 15px;
}

.menu {
  display: flex;
  width: 585px;
  height: 34px;
  border-right: 1px solid #bbb;
}

.menu button {
  padding: 0 14px;
}

.menu u {
  text-underline-offset: 2px;
}

.quick {
  display: flex;
  align-items: center;
  gap: 5px;
  width: 178px;
  height: 32px;
  margin: 0 auto 0 14px;
  padding-bottom: 4px;
  border-bottom: 1px solid #999;
  color: #8a8a8a;
}

.quick input {
  width: 140px;
  outline: 0;
}

.quick input::placeholder {
  color: #8a8a8a;
}

.run-status {
  padding-right: 16px;
}

.tool-row {
  display: flex;
  align-items: center;
  height: 34px;
  padding: 0 11px 0 12px;
  color: #2f4f86;
}

.tool-row button {
  position: relative;
  display: flex;
  align-items: center;
  justify-content: center;
  width: 42px;
  height: 30px;
}

.tool-row .drop {
  width: 37px;
}

.tool-row .drop::after {
  content: "";
  position: absolute;
  right: 7px;
  bottom: 2px;
  border-left: 5px solid transparent;
  border-bottom: 5px solid #444;
}

.tool-row .off, .tools .off {
  color: #b4b4b4;
}

.layout-pick {
  position: relative;
  width: 215px;
  margin-left: auto;
  color: #000;
}

.layout-pick select {
  display: block;
  width: 100%;
  height: 28px;
  padding-left: 28px;
  border: 2px solid #c6c6c6;
  background: #fff;
}

.pick-icon {
  position: absolute;
  left: 9px;
  top: 9px;
  width: 14px;
  height: 12px;
  color: #999;
}

.pick-arrow {
  position: absolute;
  right: 10px;
  top: 9px;
  width: 12px;
  height: 12px;
  color: #666;
}

/* flow navigator */
.workspace {
  display: flex;
  flex: 1;
  min-height: 0;
}

.flow {
  display: flex;
  flex-direction: column;
  flex: none;
  width: 249px;
  border-right: 1px solid #999;
}

.flow-head {
  display: flex;
  align-items: center;
  gap: 10px;
  flex: none;
  height: 38px;
  padding: 0 6px 0 10px;
  background: #6b6b6b;
  color: #d0d0d0;
}

.flow-head h2 {
  flex: 1;
  color: #fff;
  font-size: 15px;
}

.flow-head b, .design-head b, .tab-tools b {
  width: 12px;
  font-size: 17px;
  text-align: center;
}

.flow-body {
  display: flex;
  flex: 1;
  min-height: 0;
}

.flow-list {
  flex: 1;
  overflow: hidden;
  white-space: nowrap;
}

.flow-list li {
  display: flex;
  align-items: center;
  height: 38px;
  padding-bottom: 2px;
}

.flow-list i {
  display: flex;
  flex: none;
  width: 24px;
  color: #2f4f86;
}

.flow-list .sub { padding-left: 60px; }
.flow-list .run { padding-left: 34px; }

.flow-list .run i, .flow-list .head i {
  color: #222;
}

.flow-list .head {
  height: 37px;
  margin-top: 21px;
  padding: 0 0 0 9px;
}

.flow-list .current {
  background: #cbdcff;
}

.current, .strong {
  font-size: 15px;
  font-weight: bold;
}

.scroll {
  display: flex;
  flex-direction: column;
  align-items: center;
  flex: none;
  width: 18px;
  padding: 4px 0 2px;
  border-left: 1px solid #e6e6e6;
  background: #f9f9f9;
  color: #777;
}

.track {
  flex: 1;
  width: 10px;
}

.thumb {
  border-radius: 5px;
  background: #c1c1c1;
}

.thumb-flow {
  height: 56%;
  margin-top: 352px;
}

.thumb-volts {
  height: 44px;
  margin-top: 6px;
}

/* design area */
.design {
  display: flex;
  flex-direction: column;
  flex: 1;
  min-width: 0;
}

.design-head {
  display: flex;
  align-items: center;
  gap: 9px;
  flex: none;
  height: 38px;
  padding: 0 8px 0 15px;
  background: #cbdcff;
  color: #8a8a8a;
}

.design-head h1 {
  flex: 1;
  color: #000;
  font-size: 15px;
}

.design-head span {
  font-size: 14px;
  font-weight: normal;
}

.panels {
  display: flex;
  flex-direction: column;
  flex: 1;
  gap: 16px;
  min-height: 0;
  padding: 12px 13px 3px 12px;
}

.upper {
  display: flex;
  flex: 1;
  gap: 16px;
  min-height: 0;
}

.left-col {
  display: flex;
  flex-direction: column;
  gap: 16px;
  width: 428px;
}

.panel {
  display: flex;
  flex-direction: column;
  min-width: 0;
  min-height: 0;
  padding: 3px;
  border: 1px solid #ccc;
  background: linear-gradient(#fff, #fff) content-box, #e8e8e8;
}

.focused {
  padding: 0;
  border: 4px solid #4a7dcf;
}

.constraints, .package {
  flex: 1;
}

.props, .ports {
  flex: none;
}

.tabs {
  display: flex;
  flex: none;
  height: 37px;
  background: #ececec;
}

.tab {
  display: flex;
  align-items: center;
  height: 31px;
  padding: 2px 18px 0 7px;
  border-right: 2px solid #c4c4c4;
  color: #8e8e8e;
  font-size: 15px;
  font-weight: bold;
  white-space: nowrap;
}

.tab.active {
  height: 37px;
  padding: 0 6px 4px;
  border-right: 0;
  background: #fff;
  color: #000;
}

.tab.closable {
  padding: 2px 5px 0 6px;
}

.close {
  width: 10px;
  height: 10px;
  margin: 4px 0 0 26px;
  color: #8e8e8e;
}

.tight .close {
  margin-left: 4px;
}

.tab-tools {
  display: flex;
  align-items: center;
  gap: 10px;
  margin-left: auto;
  padding: 6px 8px 0 0;
  color: #8e8e8e;
}

.tools {
  display: flex;
  align-items: center;
  flex: none;
  height: 42px;
  border-bottom: 3px solid #e8e8e8;
  color: #2f4f86;
}

.tools button {
  display: flex;
  align-items: center;
  justify-content: center;
  width: 42px;
  height: 26px;
  border-right: 1px solid #ddd;
}

.tools .gear {
  margin-left: auto;
  border-right: 0;
}

.tools .pressed {
  width: 30px;
  height: 29px;
  margin: 0 6px;
  border: 1px solid #aaa;
  background: #ececec;
}

.props .tools .gear {
  margin-left: 0;
}

.tools-title {
  flex: 1;
  padding-left: 12px;
  color: #000;
}

.vref {
  display: flex;
  align-items: center;
  gap: 15px;
  flex: none;
  height: 37px;
  padding: 0 0 2px 13px;
  border: 2px solid #4a7dcf;
}

.vref svg {
  color: #777;
}

.volts {
  display: flex;
  flex: none;
}

.volts ul {
  flex: 1;
  padding-bottom: 2px;
}

.volts li {
  display: flex;
  align-items: center;
  height: 29px;
  padding: 0 0 2px 10px;
}

.volts i {
  display: flex;
  width: 18px;
  color: #888;
}

.folder {
  width: 13px;
  height: 11px;
  margin-right: 8px;
  color: #c4c4c4;
}

.dim {
  color: #8a8a8a;
}

.hint {
  padding: 21px 8px 0;
  line-height: 22px;
}

.prop {
  display: flex;
  gap: 16px;
  padding: 18px 17px 33px;
}

/* package view */
.canvas {
  display: flex;
  flex: 1;
  min-height: 0;
  background: #000;
  color: #fff;
}

.ruler {
  display: flex;
  flex-direction: column;
  justify-content: space-between;
  flex: none;
  width: 25px;
  padding: 33px 0 25px;
  background: #424242;
  font-size: 11px;
  line-height: 12px;
  text-align: center;
}

.stage {
  display: flex;
  justify-content: center;
  flex: 1;
  min-width: 0;
  padding-right: 24px;
  background: linear-gradient(#424242 25px, #000 25px);
}

#chip {
  height: 100%;
}

.axis {
  fill: #fff;
  font-size: 11px;
  text-anchor: middle;
}

.pin-letter {
  font-size: 14px;
  font-weight: bold;
  text-anchor: middle;
}

/* ports table */
.port-table {
  width: 1159px;
  margin-bottom: 37px;
  table-layout: fixed;
  border-collapse: collapse;
}

.port-table th, .port-table td {
  height: 30px;
  padding: 0 0 0 9px;
  border-right: 1px solid #dcdcdc;
  border-bottom: 1px solid #dce3f0;
  text-align: left;
  white-space: nowrap;
}

.port-table th {
  border-bottom: 0;
  background: #ececec;
  font-weight: normal;
}

.port-table .group td {
  padding-left: 6px;
  border-right: 0;
}

.port-table .top td {
  height: 29px;
}

.port-table .num {
  padding-right: 8px;
  text-align: right;
}

.port-table .mid {
  padding: 0;
  text-align: center;
}

.sel {
  background: #cbdcff;
}

.node {
  display: flex;
  align-items: center;
}

.node .i12 {
  margin-right: 11px;
  color: #888;
}

.deep {
  padding-left: 20px;
}

.pick {
  position: relative;
  display: flex;
  align-items: center;
}

.pick select {
  width: 100%;
}

.pick svg {
  position: absolute;
  right: 14px;
  color: #777;
}

.std svg {
  right: 11px;
  width: 8px;
  height: 8px;
  color: #222;
}

.port-table input {
  appearance: none;
  display: block;
  width: 18px;
  height: 18px;
  margin: 0 auto;
  border: 2px solid #999;
  border-radius: 4px;
  background: #fff;
}

.port-table input:checked::after {
  content: "";
  display: block;
  width: 5px;
  height: 9px;
  margin: 0 0 0 4px;
  border: solid #444;
  border-width: 0 2px 2px 0;
  transform: rotate(40deg);
}

.w48 { width: 48px; }
.w55 { width: 55px; }
.w57 { width: 57px; }
.w60 { width: 60px; }
.w67 { width: 67px; }
.w80 { width: 80px; }
.w83 { width: 83px; }
.w84 { width: 84px; }
.w90 { width: 90px; }
.w104 { width: 104px; }
.w115 { width: 115px; }
.w157 { width: 157px; }

/* footer strip */
.status {
  flex: none;
  height: 26px;
  padding: 0 15px;
  background: #eee;
  color: #8a8a8a;
  font: 14px/18px "Noto Sans", sans-serif;
  text-align: right;
}
```
